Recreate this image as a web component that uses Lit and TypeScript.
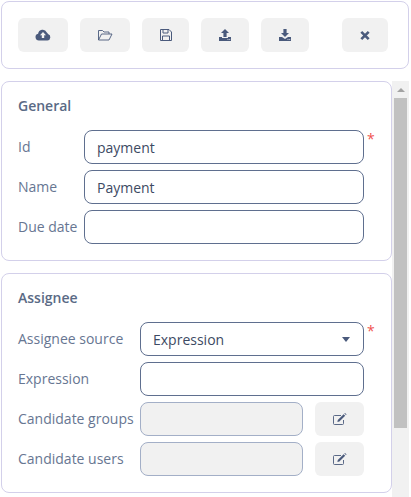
import { LitElement, html, css, svg } from "lit";
import { customElement } from "lit/decorators.js";

const C = "#4a5a7c";
const icon = (content: unknown, w = 16) =>
  html`<svg width=${w} height="14" viewBox="0 0 16 14">${content}</svg>`;

const cloud = svg`<path fill=${C} d="M4 12.5a3.4 3.4 0 0 1-.9-6.7A4.6 4.6 0 0 1 11.8 4.4 3 3 0 0 1 13 5.9a3.4 3.4 0 0 1-.6 6.6z"/><path fill="#f1f1f1" d="M8 3.9 11 7.2H9.2V10H6.8V7.2H5z"/>`;
const folder = svg`<path fill="none" stroke=${C} stroke-width="0.9" d="M1.5 12V2.5H5.5L7 4H12V6M1.5 12H12L15 6H4.5Z"/>`;
const floppy = svg`<path fill="none" stroke=${C} stroke-width="1" d="M2.5 1.5H11L13.5 4V12.5H2.5Z"/><path fill="none" stroke=${C} stroke-width="1" d="M5 1.5V5H10V1.5M4.5 12.5V8H11.5V12.5"/>`;
const upload = svg`<path fill=${C} d="M8 1 12 5H9.6V9H6.4V5H4ZM2 9H5V10H11V9H14V13H2Z"/><path fill="#f1f1f1" d="M10.5 11.2h1v.8h-1zM12.2 11.2h1v.8h-1z"/>`;
const download = svg`<path fill=${C} d="M6.4 1H9.6V5H12L8 9 4 5H6.4ZM2 9H5L8 11 11 9H14V13H2Z"/><path fill="#f1f1f1" d="M10.5 11.2h1v.8h-1zM12.2 11.2h1v.8h-1z"/>`;
const close = svg`<path fill="none" stroke=${C} stroke-width="2.6" d="M4.3 3.8 11.7 11.2M11.7 3.8 4.3 11.2"/>`;
const edit = svg`<path fill="none" stroke=${C} stroke-width="0.9" d="M11.5 8V11.5A1 1 0 0 1 10.5 12.5H2.5A1 1 0 0 1 1.5 11.5V4.5A1 1 0 0 1 2.5 3.5H9"/><path fill=${C} d="M5.8 8 11.6 2.2 13.2 3.8 7.4 9.6 5.4 10ZM12.3 1.5 13 1 14.6 2.5 14 3.1Z"/>`;

@customElement("app-root")
export class AppRoot extends LitElement {
  static styles = css`
    :host {
      display: block;
      width: 411px;
      height: 497px;
      overflow: hidden;
      box-sizing: border-box;
      padding: 1px 2px 0 1px;
      font-family: "Open Sans", sans-serif;
      font-size: 14px;
      color: #677692;
      background: #fff;
    }
    .box {
      border: 1px solid #d3d0ea;
      border-radius: 8px;
      box-sizing: border-box;
    }
    .toolbar {
      height: 68px;
      display: flex;
      align-items: center;
      padding: 0 20px 0 16px;
    }
    .btn {
      height: 34px;
      border-radius: 6px;
      background: #f1f1f1;
      display: flex;
      align-items: center;
      justify-content: center;
      flex: none;
    }
    .w50 { width: 50px; margin-right: 12px; }
    .w47 { width: 47px; margin-right: 12px; }
    .w48 { width: 48px; margin-right: 12px; }
    .w46 { width: 46px; margin-left: 21px; }
    .body {
      display: flex;
      margin-top: 12px;
    }
    .panels {
      width: 391px;
      flex: none;
      display: flex;
      flex-direction: column;
      gap: 12px;
    }
    .panel {
      padding: 14px 27px 0 16px;
    }
    .general { height: 180px; }
    .assignee { height: 220px; }
    h3 {
      margin: 0;
      font-size: 14px;
      line-height: 19px;
      font-weight: 600;
      color: #5a6a85;
    }
    .rows {
      display: flex;
      flex-direction: column;
      gap: 6px;
    }
    .general .rows { margin-top: 15px; }
    .assignee .rows { margin-top: 15px; }
    .row {
      display: flex;
      align-items: center;
      position: relative;
      height: 34px;
    }
    label { padding-bottom: 2px; }
    .general label { width: 66px; flex: none; }
    .assignee label { width: 122px; flex: none; white-space: nowrap; }
    .field {
      flex: 1;
      min-width: 0;
      height: 34px;
      box-sizing: border-box;
      border: 1px solid #5f6f8f;
      border-radius: 8px;
      padding: 0 12px;
      display: flex;
      align-items: center;
      justify-content: space-between;
      color: #3d4a63;
      background: #fff;
    }
    .field.disabled {
      background: #f1f1f1;
      border-color: #a3afc7;
    }
    .row .btn { width: 49px; margin-left: 12px; }
    .req {
      position: absolute;
      left: calc(100% + 3px);
      top: -1px;
      color: #f0524f;
      font-size: 14px;
      line-height: 19px;
    }
    .caret {
      width: 0;
      height: 0;
      border-left: 4px solid transparent;
      border-right: 4px solid transparent;
      border-top: 5px solid #4a5a7c;
      margin-right: 1px;
    }
    .scrollbar {
      width: 17px;
      flex: none;
      background: #f1f1f1;
      display: flex;
      flex-direction: column;
      align-items: center;
      height: 420px;
    }
    .up {
      height: 17px;
      flex: none;
      display: flex;
      align-items: center;
      justify-content: center;
    }
    .up span {
      width: 0;
      height: 0;
      border-left: 4px solid transparent;
      border-right: 4px solid transparent;
      border-bottom: 4px solid #a3a3a3;
    }
    .thumb {
      width: 13px;
      height: 330px;
      background: #c1c1c1;
      flex: none;
    }
  `;

  render() {
    return html`
      <div class="box toolbar">
        <div class="btn w50">${icon(cloud)}</div>
        <div class="btn w50">${icon(folder)}</div>
        <div class="btn w47">${icon(floppy)}</div>
        <div class="btn w48">${icon(upload)}</div>
        <div class="btn w48">${icon(download)}</div>
        <div class="btn w46">${icon(close)}</div>
      </div>
      <div class="body">
        <div class="panels">
          <div class="box panel general">
            <h3>General</h3>
            <div class="rows">
              <div class="row"><label>Id</label><div class="field">payment</div><span class="req">*</span></div>
              <div class="row"><label>Name</label><div class="field">Payment</div></div>
              <div class="row"><label>Due date</label><div class="field"></div></div>
            </div>
          </div>
          <div class="box panel assignee">
            <h3>Assignee</h3>
            <div class="rows">
              <div class="row"><label>Assignee source</label><div class="field">Expression<span class="caret"></span></div><span class="req">*</span></div>
              <div class="row"><label>Expression</label><div class="field"></div></div>
              <div class="row"><label>Candidate groups</label><div class="field disabled"></div><div class="btn">${icon(edit)}</div></div>
              <div class="row"><label>Candidate users</label><div class="field disabled"></div><div class="btn">${icon(edit)}</div></div>
            </div>
          </div>
        </div>
        <div class="scrollbar">
          <div class="up"><span></span></div>
          <div class="thumb"></div>
        </div>
      </div>
    `;
  }
}
